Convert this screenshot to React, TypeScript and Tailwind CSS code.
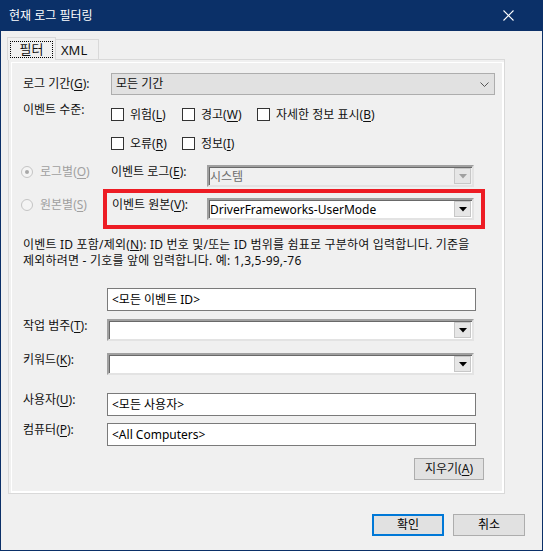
import type { ReactNode } from "react";

const FONT = "font-['Noto_Sans','Noto_Sans_CJK_KR',sans-serif]";

// Windows-style mnemonic label: text(<u>K</u>)
function Mn({ text, k, suffix = ":" }: { text: string; k: string; suffix?: string }) {
  return (
    <>
      {text}(<u className="underline-offset-2">{k}</u>){suffix}
    </>
  );
}

function ArrowBtn({ disabled }: { disabled?: boolean }) {
  return (
    <div className="mr-[1px] flex h-[16px] w-[17px] items-center justify-center border border-[#c7c7c7] bg-[#e6e6e6]">
      <svg width="8" height="5" viewBox="0 0 8 5">
        <path d="M0 0h8L4 4.5z" fill={disabled ? "#a0a0a0" : "#000"} />
      </svg>
    </div>
  );
}

// classic sunken combo box
function Combo({ w, value, disabled }: { w: string; value?: string; disabled?: boolean }) {
  return (
    <div
      className={`${w} flex h-[22px] items-center border-2 border-t-[#a0a0a0] border-l-[#a0a0a0] border-r-[#e3e3e3] border-b-[#e3e3e3] shadow-[inset_1px_1px_0_#696969] ${
        disabled ? "bg-[#f0f0f0] text-[#6d6d6d]" : "bg-white text-black"
      }`}
    >
      <span className="flex-1 truncate pl-[1px] pt-[1px]">{value}</span>
      <ArrowBtn disabled={disabled} />
    </div>
  );
}

function TextBox({ value }: { value: string }) {
  return (
    <div className="flex h-[23px] w-[369px] items-center border border-[#7a7a7a] bg-white pl-[4px] text-black">
      {value}
    </div>
  );
}

function Check({ children, w }: { children: ReactNode; w?: string }) {
  return (
    <label className={`flex items-center gap-[6px] ${w ?? ""}`}>
      <span className="h-[13px] w-[13px] border border-[#333] bg-white" />
      <span>{children}</span>
    </label>
  );
}

function Radio({ on, children }: { on?: boolean; children: ReactNode }) {
  return (
    <div className="flex w-[90px] items-center gap-[7px] text-[#a0a0a0]">
      <span className="flex h-[12px] w-[12px] items-center justify-center rounded-full border border-[#c4c4c4] bg-[#f4f4f4]">
        {on && <span className="h-[4px] w-[4px] rounded-full bg-[#a8a8a8]" />}
      </span>
      <span>{children}</span>
    </div>
  );
}

function Btn({ children, primary }: { children: ReactNode; primary?: boolean }) {
  return (
    <div
      className={`flex h-[22px] w-[72px] items-center justify-center bg-[#e1e1e1] text-black ${
        primary ? "border-2 border-[#0078d7]" : "border border-[#adadad]"
      }`}
    >
      {children}
    </div>
  );
}

export default function App() {
  return (
    <div className={`${FONT} flex h-[551px] w-[543px] flex-col bg-[#0b3068] text-[12px] leading-[16px] text-[#111]`}>
      {/* title bar */}
      <div className="flex h-[31px] shrink-0 items-center justify-between pl-[9px] pr-[29px] text-white">
        <span className="text-[12px]">현재 로그 필터링</span>
        <svg width="11" height="11" viewBox="0 0 11 11">
          <path d="M0.5 0.5l10 10M10.5 0.5l-10 10" stroke="#fff" strokeWidth="1.1" />
        </svg>
      </div>

      <div className="mx-[1px] mb-[1px] flex flex-1 flex-col bg-[#f0f0f0] pl-[6px] pt-[6px]">
        {/* tabs */}
        <div className="flex h-[22px] items-end">
          <div className="z-10 mb-[-1px] flex h-[23px] w-[49px] items-center justify-center border border-b-0 border-[#d9d9d9] bg-[#f0f0f0]">
            <span className="flex h-[17px] w-[43px] items-center justify-center border border-dotted border-black text-[13px]">
              필터
            </span>
          </div>
          <div className="flex h-[20px] w-[43px] items-center border border-b-0 border-l-0 border-[#d9d9d9] pl-[5px] text-[13px]">
            XML
          </div>
        </div>

        {/* panel */}
        <div className="ml-[1px] flex h-[435px] w-[497px] flex-col border border-[#d9d9d9] shadow-[inset_2px_2px_0_#f0f0f0,inset_3px_3px_0_#fff,inset_-2px_-2px_0_#fff]">
          <div className="mt-[13px] flex h-[22px] items-center pl-[14px]">
            <div className="w-[88px]">
              <Mn text="로그 기간" k="G" />
            </div>
            <div className="flex h-[22px] w-[384px] items-center justify-between border border-[#adadad] bg-[#e1e1e1] pl-[4px] pr-[5px]">
              <span>모든 기간</span>
              <svg width="9" height="5" viewBox="0 0 9 5">
                <path d="M0.5 0.5l4 4 4-4" stroke="#555" fill="none" />
              </svg>
            </div>
          </div>

          <div className="mt-[9px] flex pl-[14px]">
            <div className="mt-[-2px] w-[88px]">이벤트 수준:</div>
            <div className="flex flex-col gap-[8px]">
              <div className="flex h-[21px] items-center">
                <Check w="w-[71px]">
                  <Mn text="위험" k="L" suffix="" />
                </Check>
                <Check w="w-[75px]">
                  <Mn text="경고" k="W" suffix="" />
                </Check>
                <Check>
                  <Mn text="자세한 정보 표시" k="B" suffix="" />
                </Check>
              </div>
              <div className="flex h-[21px] items-center">
                <Check w="w-[71px]">
                  <Mn text="오류" k="R" suffix="" />
                </Check>
                <Check>
                  <Mn text="정보" k="I" suffix="" />
                </Check>
              </div>
            </div>
          </div>

          <div className="mt-[10px] flex items-start pl-[12px]">
            <Radio on>
              <Mn text="로그별" k="O" suffix="" />
            </Radio>
            <div className="w-[96px]">
              <Mn text="이벤트 로그" k="E" />
            </div>
            <Combo w="w-[267px] mt-[1px]" value="시스템" disabled />
          </div>

          <div className="relative mt-[10px] flex items-start pl-[12px]">
            <Radio>
              <Mn text="원본별" k="S" suffix="" />
            </Radio>
            <div className="w-[96px] pl-[1px]">
              <Mn text="이벤트 원본" k="V" />
            </div>
            <Combo w="w-[267px] mt-[1px]" value="DriverFrameworks-UserMode" />
            <div className="absolute left-[94px] top-[-8px] h-[40px] w-[382px] border-[4px] border-[#ed1c24]" />
          </div>

          <p className="mt-[17px] pl-[14px] leading-[16px] tracking-[0.2px]">
            이벤트 ID 포함/제외(<u>N</u>): ID 번호 및/또는 ID 범위를 쉼표로 구분하여 입력합니다. 기준을
            <br />
            제외하려면 - 기호를 앞에 입력합니다. 예: 1,3,5-99,-76
          </p>

          <div className="mt-[19px] flex pl-[98px]">
            <TextBox value="<모든 이벤트 ID>" />
          </div>

          <div className="mt-[7px] flex items-start pl-[14px]">
            <div className="w-[84px]">
              <Mn text="작업 범주" k="T" />
            </div>
            <Combo w="w-[367px] mt-[1px]" />
          </div>

          <div className="mt-[11px] flex items-start pl-[14px]">
            <div className="w-[84px]">
              <Mn text="키워드" k="K" />
            </div>
            <Combo w="w-[367px] mt-[1px]" />
          </div>

          <div className="mt-[17px] flex items-start pl-[14px]">
            <div className="w-[84px]">
              <Mn text="사용자" k="U" />
            </div>
            <div className="mt-[1px]">
              <TextBox value="<모든 사용자>" />
            </div>
          </div>

          <div className="mt-[6px] flex items-start pl-[14px]">
            <div className="w-[84px]">
              <Mn text="컴퓨터" k="P" />
            </div>
            <div className="mt-[1px]">
              <TextBox value="<All Computers>" />
            </div>
          </div>

          <div className="mt-[12px] flex justify-end pr-[20px]">
            <div className="flex h-[22px] w-[70px] items-center justify-center border border-[#adadad] bg-[#e1e1e1]">
              <Mn text="지우기" k="A" suffix="" />
            </div>
          </div>
        </div>

        {/* dialog buttons */}
        <div className="mt-[20px] flex justify-end gap-[9px] pr-[17px]">
          <Btn primary>확인</Btn>
          <Btn>취소</Btn>
        </div>
      </div>
    </div>
  );
}
